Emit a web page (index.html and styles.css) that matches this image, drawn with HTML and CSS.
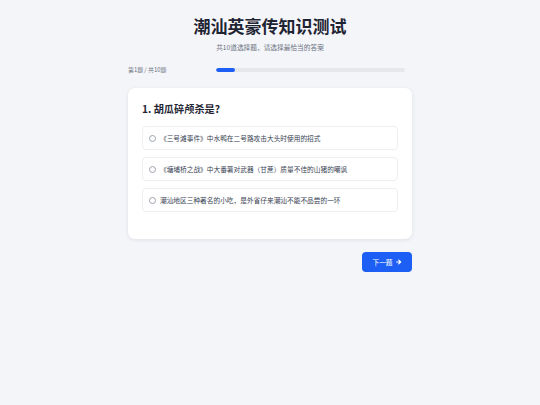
FILE: index.html
```html
<!DOCTYPE html>
<html lang="zh">
<head>
<meta charset="utf-8">
<title>潮汕英豪传知识测试</title>
<link rel="stylesheet" href="styles.css">
</head>
<body>
<div class="wrap">
  <h1 class="title">潮汕英豪传知识测试</h1>
  <p class="subtitle">共10道选择题，请选择最恰当的答案</p>
  <div class="progress-row">
    <span class="progress-label">第1题 / 共10题</span>
    <div class="bar"><div class="bar-fill" style="width:10%"></div></div>
  </div>
  <div class="card">
    <h2 class="question">1. 胡瓜碎颅杀是?</h2>
    <div class="options">
      <label class="option"><span class="radio"></span><span class="opt-text">《三号滩事件》中水鸭在二号路攻击大头时使用的招式</span></label>
      <label class="option"><span class="radio"></span><span class="opt-text">《塘埔桥之战》中大番薯对武器（甘蔗）质量不佳的山猪的嘲讽</span></label>
      <label class="option"><span class="radio"></span><span class="opt-text">潮汕地区三种著名的小吃，是外省仔来潮汕不能不品尝的一环</span></label>
    </div>
  </div>
  <div class="actions">
    <button class="next-btn">下一题
      <svg class="arrow" viewBox="0 0 10 10" width="6" height="6"><path d="M1 5h6M4.5 1.8L7.8 5 4.5 8.2" fill="none" stroke="#fff" stroke-width="2" stroke-linecap="round" stroke-linejoin="round"/></svg>
    </button>
  </div>
</div>
</body>
</html>
```
FILE: styles.css
```css
html, body {
  margin: 0;
  padding: 0;
  background: #f4f5f9;
  font-family: "Noto Sans CJK SC", "Noto Sans", sans-serif;
  color: #1f2937;
}
.wrap {
  width: 284px;
  margin: 0 auto;
  padding-top: 15px;
}
.title {
  margin: 0;
  font-size: 17px;
  line-height: 22px;
  font-weight: 700;
  text-align: center;
  color: #1f2433;
}
.subtitle {
  margin: 5px 0 0;
  font-size: 6.7px;
  line-height: 10px;
  text-align: center;
  color: #6b7280;
}
.progress-row {
  margin-top: 13px;
  height: 10px;
  display: flex;
  align-items: center;
}
.progress-label {
  width: 88px;
  font-size: 5.9px;
  line-height: 10px;
  color: #6b7280;
}
.bar {
  flex: 1;
  margin-right: 7px;
  height: 3.5px;
  border-radius: 2px;
  background: #e5e7eb;
  overflow: hidden;
}
.bar-fill {
  height: 100%;
  border-radius: 2px;
  background: #1d5ff5;
}
.card {
  margin-top: 13px;
  background: #fff;
  border-radius: 7px;
  box-shadow: 0 1px 4px rgba(15, 23, 42, 0.09);
  padding: 14px 14px 14px;
}
.question {
  margin: 0;
  font-size: 10.2px;
  line-height: 14px;
  font-weight: 700;
  color: #1f2433;
}
.options {
  margin: 10px 0 13px;
  display: flex;
  flex-direction: column;
  gap: 7px;
}
.option {
  display: flex;
  align-items: center;
  gap: 4px;
  height: 24px;
  box-sizing: border-box;
  padding: 0 6px;
  border: 1px solid #eceef2;
  border-radius: 4px;
  background: #fff;
}
.radio {
  width: 5px;
  height: 5px;
  border: 1px solid #9ca3af;
  border-radius: 50%;
  flex: none;
}
.opt-text {
  font-size: 6.7px;
  line-height: 10px;
  color: #374151;
}
.actions {
  margin-top: 13px;
  display: flex;
  justify-content: flex-end;
}
.next-btn {
  width: 50px;
  height: 20px;
  border: none;
  border-radius: 4px;
  background: #1d5ff5;
  color: #fff;
  font-family: inherit;
  font-size: 6.7px;
  display: flex;
  align-items: center;
  justify-content: center;
  gap: 3px;
  padding: 0;
}
.arrow {
  display: block;
}
```
